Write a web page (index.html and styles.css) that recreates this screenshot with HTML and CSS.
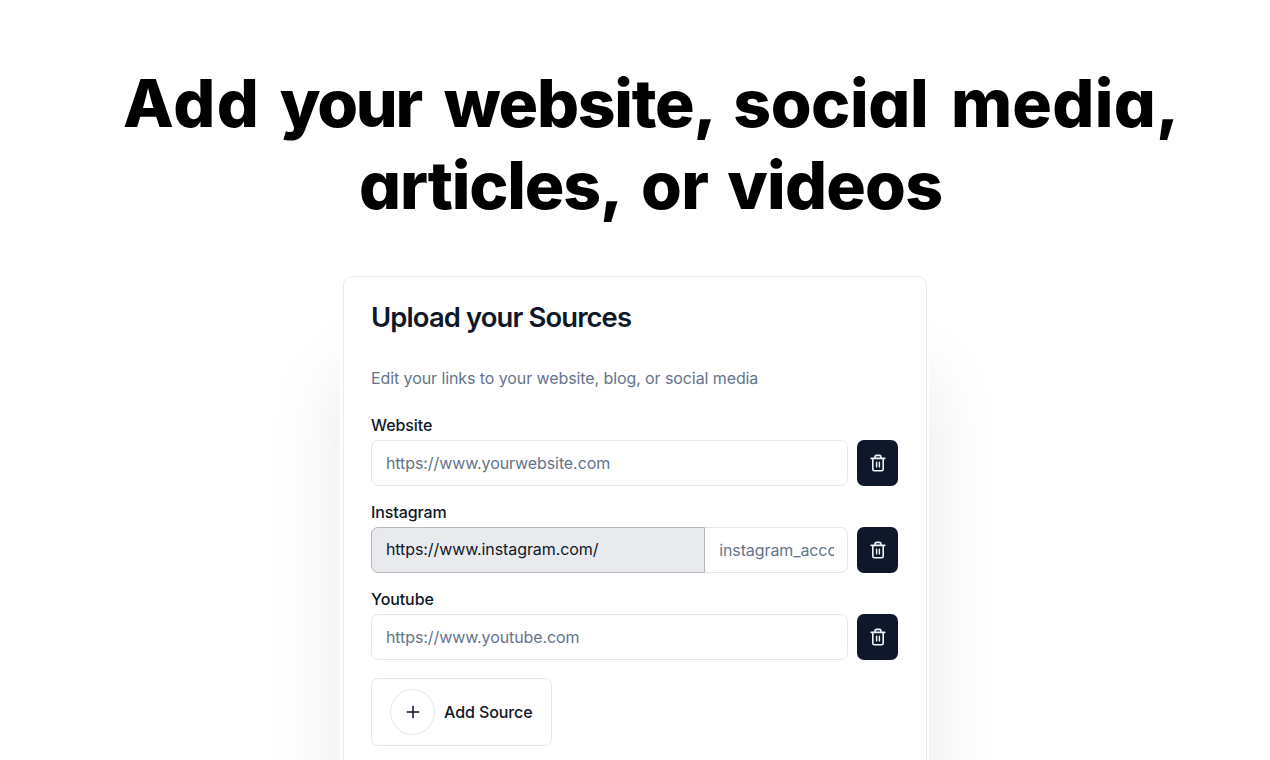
FILE: index.html
```html
<!DOCTYPE html>
<html lang="en">
<head>
<meta charset="utf-8">
<title>Upload your Sources</title>
<link rel="stylesheet" href="styles.css">
</head>
<body>
<svg class="sprite" aria-hidden="true">
  <symbol id="trash" viewBox="0 0 18 18">
    <g fill="none" stroke="currentColor" stroke-width="1.6" stroke-linecap="round" stroke-linejoin="round">
      <path d="M2.2 4.4h13.6M3.8 4.4v10.8q0 1.6 1.6 1.6h7.2q1.6 0 1.6-1.6V4.4M6 4.2V3q0-1.6 1.6-1.6h2.8q1.6 0 1.6 1.6v1.2"/>
      <path d="M7.6 8.3v4.6M10.4 8.3v4.6" stroke-width="1.4"/>
    </g>
  </symbol>
</svg>
<main class="page">
  <h1 class="headline">
    <span class="line first"><span class="w-add">Add</span> <span class="w-your">your</span> <span class="w-website">website,</span> <span class="w-social">social</span> <span class="w-media">media,</span></span>
    <span class="line second"><span class="w-articles">articles,</span> <span class="w-or">or</span> <span class="w-videos">videos</span></span>
  </h1>
  <div class="frame">
    <section class="card">
      <h2 class="title">Upload your Sources</h2>
      <p class="subtitle">Edit your links to your website, blog, or social media</p>
      <div class="field">
        <div class="label">Website</div>
        <div class="row"><div class="input">https://www.yourwebsite.com</div><button class="delete" aria-label="Delete"><svg><use href="#trash"/></svg></button></div>
      </div>
      <div class="field">
        <div class="label">Instagram</div>
        <div class="row"><div class="prefix">https://www.instagram.com/</div><div class="input account"><span class="clip">instagram_account</span></div><button class="delete" aria-label="Delete"><svg><use href="#trash"/></svg></button></div>
      </div>
      <div class="field">
        <div class="label">Youtube</div>
        <div class="row"><div class="input">https://www.youtube.com</div><button class="delete" aria-label="Delete"><svg><use href="#trash"/></svg></button></div>
      </div>
      <button class="add"><span class="circle"><svg viewBox="0 0 14 14"><path d="M7 1.2v11.6M1.2 7h11.6" fill="none" stroke="currentColor" stroke-width="1.5" stroke-linecap="round"/></svg></span><span>Add Source</span></button>
    </section>
  </div>
</main>
</body>
</html>
```
FILE: styles.css
```css
* { box-sizing: border-box; }
body { margin: 0; background: #fff; font-family: Inter, "Liberation Sans", sans-serif; color: #0f172a; }
.sprite { display: none; }
.page { height: 760px; overflow: hidden; display: flow-root; }
.headline { margin: 62px 0 0; height: 211px; color: #000; font-size: 66px; line-height: 82px; font-weight: 800; font-feature-settings: "cv11" 1; white-space: nowrap; }
.line { display: flex; gap: 22px; }
.first { padding-left: 123px; }
.second { padding-left: 359px; }
.w-add { letter-spacing: 1.5px; }
.w-your { letter-spacing: -2.3px; margin-left: -2.5px; }
.w-website { letter-spacing: -1.25px; margin-left: .8px; }
.w-social { letter-spacing: -.4px; margin-left: -4.3px; }
.w-media { letter-spacing: .3px; margin-left: .6px; }
.w-articles { letter-spacing: -1.2px; }
.w-or { letter-spacing: -.5px; margin-left: -3px; }
.w-videos { letter-spacing: -.8px; margin-left: -3.3px; }
.frame { width: 589px; height: 600px; margin-left: 340px; padding: 2.5px 2.5px 0 3px; background: #fff; border-radius: 8px; box-shadow: 0 100px 80px rgba(0,0,0,.09); }
.card { height: 600px; border: 1.5px solid #e8ecf2; border-radius: 9px; padding: 22.5px 27.5px 0 27px; letter-spacing: -.09px; }
.title { margin: 0; font-size: 27.4px; line-height: 36px; font-weight: 600; letter-spacing: -.87px; white-space: nowrap; }
.subtitle { margin: 31px 0 0; font-size: 16px; line-height: 24px; color: #64748b; white-space: nowrap; }
.field { height: 87px; }
.subtitle + .field { margin-top: 23px; }
.label { font-size: 16px; line-height: 24px; font-weight: 500; height: 27px; }
.row { display: flex; height: 46px; }
.input { flex: 1; display: flex; align-items: center; border: 1.3px solid #e2e8f0; border-radius: 7px; padding: 0 14px; color: #64748b; font-size: 16px; }
.prefix { width: 335px; display: flex; align-items: center; border: 1.5px solid #b4b8bd; border-radius: 7px 0 0 7px; background: #e9eaee; padding: 0 14px 2px; font-size: 16px; }
.account { border-left: 0; border-radius: 0 7px 7px 0; padding-right: 13px; }
.clip { width: 115px; overflow: hidden; white-space: nowrap; }
.delete { width: 41px; height: 46px; margin-left: 9px; padding: 0; border: 0; border-radius: 7px; background: #0f172a; color: #f1f5f9; display: flex; align-items: center; justify-content: center; }
.delete svg { width: 18px; height: 18px; }
.add { width: 181px; height: 68px; margin: 4px 0 0; padding: 0 0 0 18px; display: flex; align-items: center; gap: 9px; background: #fff; border: 1.3px solid #e2e8f0; border-radius: 7px; font: 500 16px Inter, sans-serif; letter-spacing: -.09px; color: #0f172a; white-space: nowrap; }
.circle { width: 45px; height: 46px; border: 1.3px solid #e2e8f0; border-radius: 50%; display: flex; align-items: center; justify-content: center; }
.circle svg { width: 14px; height: 14px; }
```
